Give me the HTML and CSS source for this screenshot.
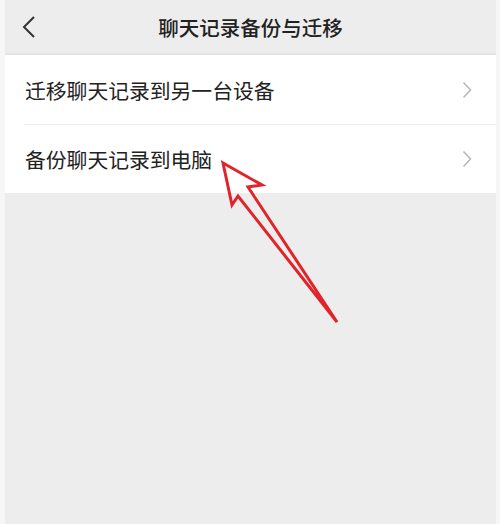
FILE: index.html
```html
<!DOCTYPE html>
<html lang="zh">
<head>
<meta charset="utf-8">
<link rel="stylesheet" href="styles.css">
</head>
<body>
<div class="app">
  <header class="nav">
    <svg class="back" width="14" height="24" viewBox="0 0 14 24"><path d="M12 2 L2 12 L12 22" fill="none" stroke="#333" stroke-width="2"/></svg>
    <div class="title">聊天记录备份与迁移</div>
  </header>
  <ul class="list">
    <li class="row"><span class="label">迁移聊天记录到另一台设备</span><svg class="chev" width="10" height="18" viewBox="0 0 10 18"><path d="M1.5 1.5 L8.5 9 L1.5 16.5" fill="none" stroke="#b8b8b8" stroke-width="1.6"/></svg></li>
    <li class="row"><span class="label">备份聊天记录到电脑</span><svg class="chev" width="10" height="18" viewBox="0 0 10 18"><path d="M1.5 1.5 L8.5 9 L1.5 16.5" fill="none" stroke="#b8b8b8" stroke-width="1.6"/></svg></li>
  </ul>
  <svg class="arrow" width="500" height="524" viewBox="0 0 500 524">
    <path d="M223 163 L262 185 L248 187 L337 322 L238 196 L232 205 Z" fill="none" stroke="#e0242a" stroke-width="3" stroke-linejoin="miter" stroke-linecap="round"/>
  </svg>
</div>
</body>
</html>
```
FILE: styles.css
```css
html, body {
  margin: 0;
  padding: 0;
  background: #f6f6f6;
}
.app {
  position: relative;
  margin: 0 4px 0 5px;
  height: 524px;
  background: #ededed;
  font-family: "Noto Sans CJK SC", "Noto Sans", sans-serif;
}
.nav {
  height: 53px;
  display: flex;
  align-items: center;
  justify-content: center;
  position: relative;
  border-bottom: 2px solid #e4e4e4;
  background: #ededed;
}
.back {
  position: absolute;
  left: 17px;
  top: 15px;
}
.title {
  font-size: 20.5px;
  font-weight: 500;
  color: #222;
}
.list {
  list-style: none;
  margin: 0;
  padding: 0;
  background: #fff;
}
.row {
  height: 69px;
  display: flex;
  align-items: center;
  justify-content: space-between;
  padding: 0 24px 0 20px;
  position: relative;
  box-sizing: border-box;
}
.row + .row {
  border-top: 1px solid #ececec;
  margin-left: 19px;
  padding-left: 1px;
}
.label {
  font-size: 20.8px;
  color: #222;
}
.chev {
  display: block;
}
.arrow {
  position: absolute;
  left: -5px;
  top: 0;
  pointer-events: none;
}
```
